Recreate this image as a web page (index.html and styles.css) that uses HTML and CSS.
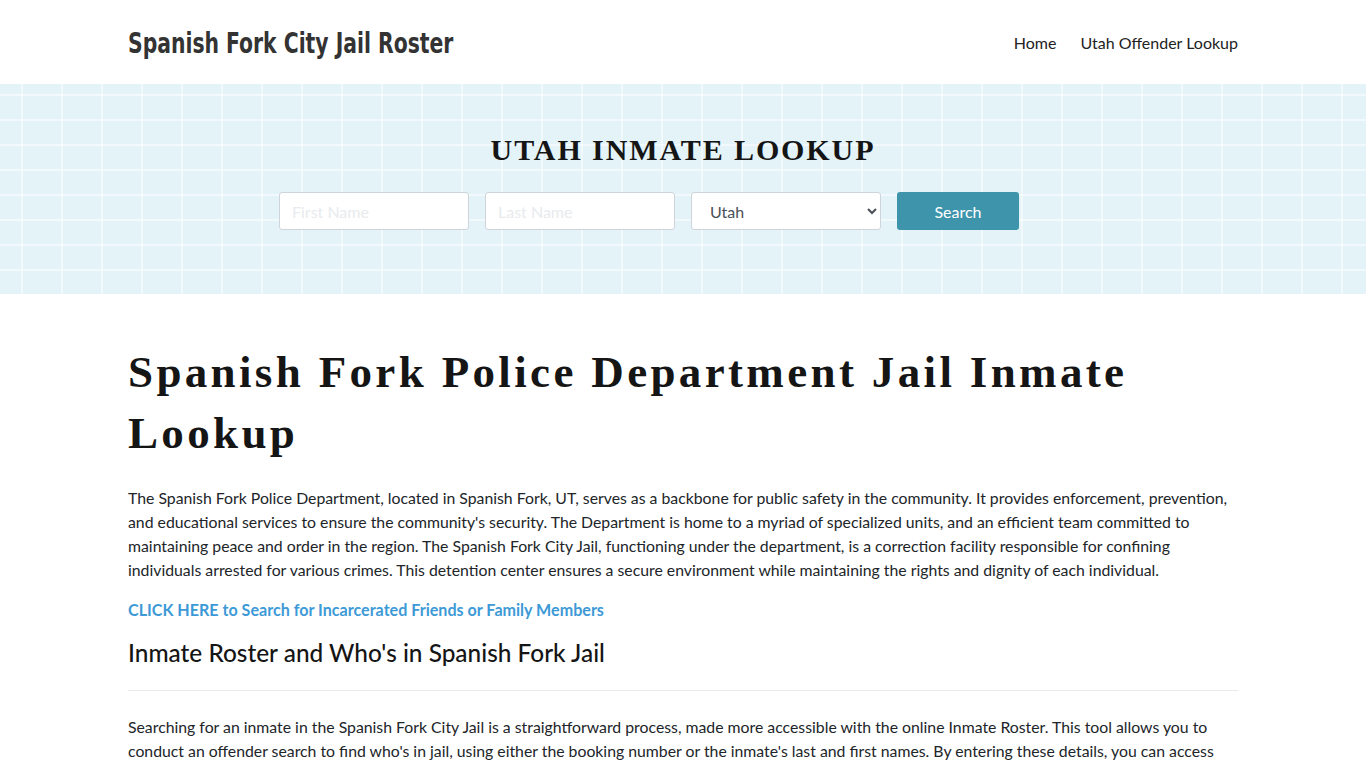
FILE: index.html
```html
<!DOCTYPE html>
<html lang="en">
<head>
<meta charset="utf-8">
<title>Spanish Fork City Jail Roster</title>
<link rel="stylesheet" href="styles.css">
</head>
<body>
<header class="site-header">
  <div class="container header-row">
    <a class="logo" href="#">Spanish Fork City Jail Roster</a>
    <nav class="nav">
      <a href="#">Home</a>
      <a href="#">Utah Offender Lookup</a>
    </nav>
  </div>
</header>
<section class="search-band">
  <h2 class="band-title">UTAH INMATE LOOKUP</h2>
  <form class="search-form">
    <input class="field" type="text" placeholder="First Name">
    <input class="field" type="text" placeholder="Last Name">
    <select class="field select">
      <option>Utah</option>
    </select>
    <button class="btn" type="button">Search</button>
  </form>
</section>
<main class="container content">
  <h1 class="page-title">Spanish Fork Police Department Jail Inmate Lookup</h1>
  <p>The Spanish Fork Police Department, located in Spanish Fork, UT, serves as a backbone for public safety in the community. It provides enforcement, prevention, and educational services to ensure the community's security. The Department is home to a myriad of specialized units, and an efficient team committed to maintaining peace and order in the region. The Spanish Fork City Jail, functioning under the department, is a correction facility responsible for confining individuals arrested for various crimes. This detention center ensures a secure environment while maintaining the rights and dignity of each individual.</p>
  <p class="cta"><a href="#">CLICK HERE to Search for Incarcerated Friends or Family Members</a></p>
  <h2 class="section-title">Inmate Roster and Who's in Spanish Fork Jail</h2>
  <hr class="rule">
  <p>Searching for an inmate in the Spanish Fork City Jail is a straightforward process, made more accessible with the online Inmate Roster. This tool allows you to conduct an offender search to find who's in jail, using either the booking number or the inmate's last and first names. By entering these details, you can access information about the inmate's current status, charges, bail amount, and other relevant details.</p>
</main>
</body>
</html>
```
FILE: styles.css
```css
* { box-sizing: border-box; }
html, body { margin: 0; padding: 0; }
body {
  font-family: Lato, "Open Sans", sans-serif;
  font-size: 15.8px;
  line-height: 24px;
  color: #212529;
  background: #fff;
}
.container {
  width: 1110px;
  margin: 0 auto;
}
.site-header { height: 84px; }
.header-row {
  height: 84px;
  display: flex;
  align-items: center;
  justify-content: space-between;
}
.logo {
  display: inline-block;
  font-family: "DejaVu Sans Condensed", "DejaVu Sans", sans-serif;
  font-stretch: condensed;
  font-weight: 700;
  font-size: 29px;
  color: #333;
  text-decoration: none;
  padding-top: 2px;
  transform: scaleX(0.78);
  transform-origin: left center;
}
.nav { display: flex; gap: 24px; padding-top: 2px; }
.nav a {
  color: #222;
  text-decoration: none;
  font-size: 16px;
}
.search-band {
  height: 210px;
  background-color: #e3f3f8;
  background-image:
    linear-gradient(90deg, rgba(255,255,255,0.5) 2px, transparent 2px),
    linear-gradient(0deg, rgba(255,255,255,0.5) 2px, transparent 2px);
  background-size: 40px 25px;
  background-position: 21px 12px;
  padding-top: 48px;
}
.band-title {
  margin: 0;
  text-align: center;
  font-family: "Liberation Serif", serif;
  font-weight: 700;
  font-size: 30px;
  line-height: 36px;
  letter-spacing: 1.9px;
  color: #151515;
}
.search-form {
  display: flex;
  justify-content: center;
  gap: 16px;
  margin-top: 24px;
  padding-right: 68px;
}
.field {
  width: 190px;
  height: 38px;
  border: 1px solid #ced4da;
  border-radius: 3px;
  background: #fff;
  font-family: Lato, sans-serif;
  font-size: 16px;
  padding: 0 12px;
  color: #495057;
}
.field::placeholder { color: #e8ebee; }
.select { padding-left: 14px; }
.btn {
  width: 122px;
  height: 38px;
  border: none;
  border-radius: 3px;
  background: #3e94ab;
  color: #fff;
  font-family: Lato, sans-serif;
  font-size: 16px;
  padding-bottom: 1px;
}
.content { padding-top: 48px; }
.page-title {
  margin: 0 0 22px;
  font-family: "Liberation Serif", serif;
  font-weight: 700;
  font-size: 45px;
  line-height: 61px;
  letter-spacing: 3.35px;
  color: #151515;
}
.content p { margin: 0 0 16px; }
.cta { font-weight: 700; font-size: 16.1px; }
.cta a { color: #3d9ad6; text-decoration: none; }
.section-title {
  margin: 0;
  font-family: Lato, sans-serif;
  font-weight: 500;
  font-size: 24.4px;
  line-height: 30px;
  color: #151515;
}
.rule {
  border: 0;
  border-top: 1px solid #e9ecef;
  margin: 22px 0 24px;
}
```
